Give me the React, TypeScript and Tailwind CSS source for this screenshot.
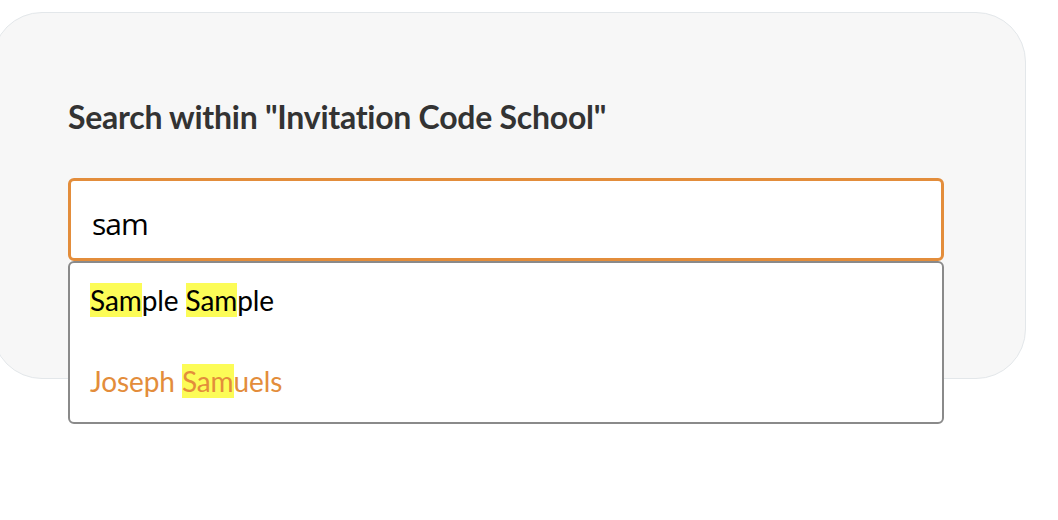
import React from "react";

const Hl = ({ children }: { children: React.ReactNode }) => (
  <span className="bg-[#fcfc57]">{children}</span>
);

export default function App() {
  return (
    <div className="w-[1058px] h-[520px] bg-white overflow-hidden relative" style={{ fontFamily: "Lato, 'Noto Sans', sans-serif" }}>
      <div className="mt-[12px] -ml-[8px] w-[1034px] h-[367px] rounded-[50px] border border-[#e3e7ea] bg-[#f7f7f7] pt-[86px] pl-[75px]">
        <h1 className="text-[32px] font-bold text-[#333] tracking-[-0.26px] leading-[36px]">
          Search within "Invitation Code School"
        </h1>
        <div className="relative mt-[43px] w-[876px]">
          <div className="h-[83px] rounded-[6px] border-[3px] border-[#e38d3b] bg-white flex items-center pl-[21px] pt-[7px] text-[30px] tracking-[-1px] text-black" style={{ fontFamily: "'Open Sans', sans-serif" }}>
            sam
          </div>
          <div className="absolute left-0 top-[83px] w-[876px] h-[163px] rounded-[6px] border-2 border-[#8a8a8a] bg-white">
            <div className="pl-[20px] pt-[20px] text-[28px] leading-[34px] tracking-[-0.1px] text-black">
              <Hl>Sam</Hl>ple <Hl>Sam</Hl>ple
            </div>
            <div className="pl-[20px] pt-[47px] text-[28px] leading-[34px] tracking-[-0.1px] text-[#e38d3b]">
              Joseph <Hl>Sam</Hl>uels
            </div>
          </div>
        </div>
      </div>
    </div>
  );
}
